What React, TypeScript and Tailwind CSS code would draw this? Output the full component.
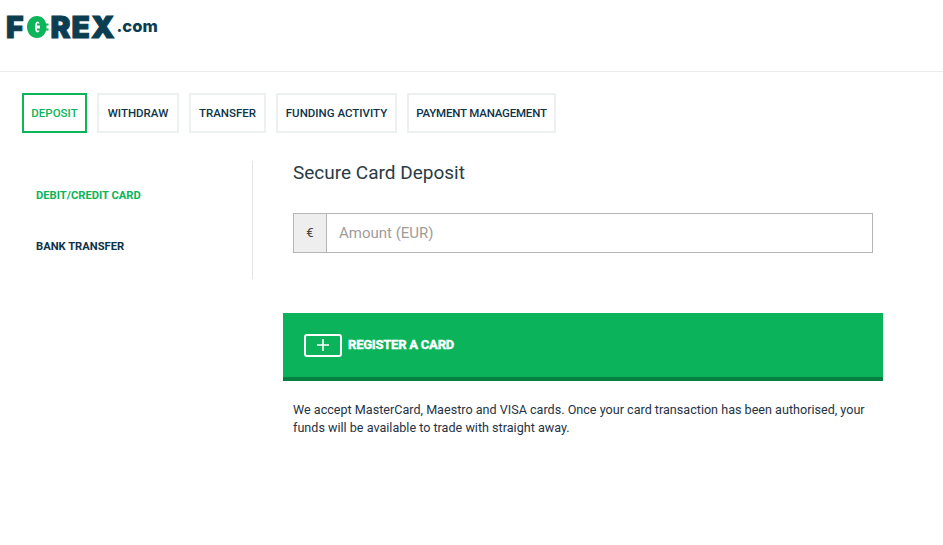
export default function App() {
  return (
    <div className="w-[943px] h-[545px] bg-white overflow-hidden font-['Roboto',sans-serif] text-[#0d3349]">
      <header className="h-[72px] border-b border-[#ececec] pl-[6px] pt-[10px]">
        <div className="flex items-start h-[32px] font-['Inter',sans-serif] font-black text-[#0c3d50]">
          <span className="text-[30px] leading-[32px] mt-[1px] [-webkit-text-stroke:1px_#0c3d50]">F</span>
          <svg viewBox="0 0 26 24" className="w-[26px] h-[24px] mt-[5px] ml-[2px]">
            <path fillRule="evenodd" d="M11 1C16.500 1 20.500 5.500 20.500 12S16.500 23 11 23 1 18.500 1 12 5.500 1 11 1zM11.500 6.500c-1.700 0-2.500 2.200-2.500 5.500s.8 5.500 2.500 5.500 2.500-2.200 2.500-5.500-.8-5.500-2.500-5.500z" fill="#0cb45a" />
            <path d="M11 9.500h11.500M11 14.500h11.500" stroke="#0cb45a" strokeWidth="1.800" />
          </svg>
          <span className="text-[30px] leading-[32px] mt-[1px] ml-[-1px] tracking-[1px] [-webkit-text-stroke:1px_#0c3d50]">REX</span>
          <span className="text-[16.5px] leading-[20px] font-extrabold ml-[1px] mt-[6px]">.com</span>
        </div>
      </header>
      <nav className="flex gap-[10px] pl-[22px] mt-[21px] text-[11.5px] font-medium">
        <button className="w-[65px] h-[40px] pt-[1px] border-2 border-[#0cb45a] text-[#0cb45a]">DEPOSIT</button>
        <button className="w-[82px] h-[40px] pt-[1px] border-2 border-[#ecf0f0]">WITHDRAW</button>
        <button className="w-[77px] h-[40px] pt-[1px] border-2 border-[#ecf0f0]">TRANSFER</button>
        <button className="w-[121px] h-[40px] pt-[1px] border-2 border-[#ecf0f0]">FUNDING ACTIVITY</button>
        <button className="w-[149px] h-[40px] pt-[1px] border-2 border-[#ecf0f0] tracking-[-0.2px]">PAYMENT MANAGEMENT</button>
      </nav>
      <div className="flex mt-[28px]">
        <aside className="w-[253px] h-[118px] border-r border-[#e6e6e6] pl-[36px] pt-[28px] text-[11.2px] font-bold">
          <div className="text-[#0cb45a] leading-[14px]">DEBIT/CREDIT CARD</div>
          <div className="mt-[37px] leading-[14px]">BANK TRANSFER</div>
        </aside>
        <main className="ml-[30px] w-[600px]">
          <h1 className="ml-[10px] text-[19px] leading-[24px] text-[#2a3b45]">Secure Card Deposit</h1>
          <div className="ml-[10px] mt-[28px] w-[580px] h-[40px] flex border border-[#b5b5b5]">
            <div className="w-[33px] bg-[#eeeeee] border-r border-[#b5b5b5] flex items-center justify-center text-[13px] text-[#444]">€</div>
            <div className="flex-1 pl-[12px] flex items-center text-[15px] text-[#a09c98]">Amount (EUR)</div>
          </div>
          <button className="mt-[60px] w-[600px] h-[68px] bg-[#0bb45a] border-b-[4px] border-[#078043] flex items-center pl-[21px] text-white">
            <span className="w-[38px] h-[23px] border-2 border-white rounded-[3px] flex items-center justify-center">
              <svg viewBox="0 0 14 14" className="w-[14px] h-[14px]"><path d="M7 1v12M1 7h12" stroke="#fff" strokeWidth="1.600" /></svg>
            </span>
            <span className="ml-[6px] text-[13px] font-extrabold tracking-[-0.25px] [-webkit-text-stroke:0.3px_#fff]">REGISTER A CARD</span>
          </button>
          <p className="ml-[10px] mt-[20px] w-[590px] text-[12.6px] leading-[18px] text-[#1f3344]">
            We accept MasterCard, Maestro and VISA cards. Once your card transaction has been authorised, your funds will be available to trade with straight away.
          </p>
        </main>
      </div>
    </div>
  );
}
